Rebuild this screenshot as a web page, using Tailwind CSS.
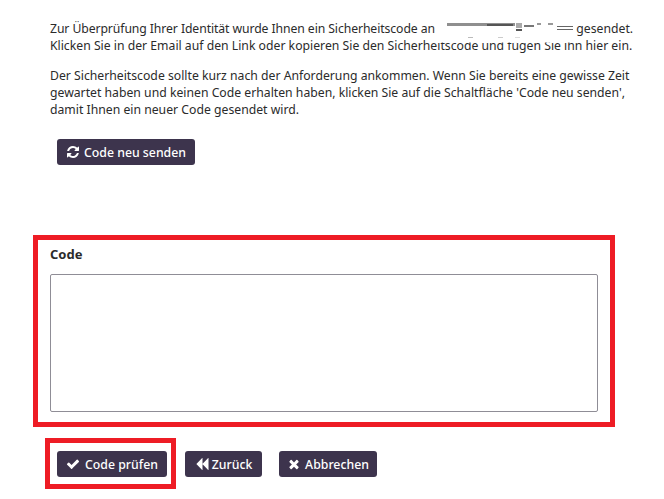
<!DOCTYPE html>
<html lang="de">
<head>
    <meta charset="UTF-8">
    <script src="https://cdn.jsdelivr.net/npm/@tailwindcss/browser@4"></script>
    <title>Code</title>
</head>
<body class="bg-white font-['Noto_Sans','Open_Sans',sans-serif] text-[12.22px] leading-[17px] text-[#2b2b2b] w-[664px] h-[499px] overflow-hidden">
    <div class="pt-[20px] pl-[50px]">
        <p class="whitespace-nowrap"><span class="tracking-[-0.09px]">Zur Überprüfung Ihrer Identität wurde Ihnen ein Sicherheitscode an</span> <span class="inline-block w-[135px] h-[10px]"></span> gesendet.<br>Klicken Sie in der Email auf den Link oder kopieren Sie den Sicherheitscode und fügen Sie ihn hier ein.</p>
        <p class="mt-[13px] whitespace-nowrap">Der Sicherheitscode sollte kurz nach der Anforderung ankommen. Wenn Sie bereits eine gewisse Zeit<br>gewartet haben und keinen Code erhalten haben, klicken Sie auf die Schaltfläche 'Code neu senden',<br>damit Ihnen ein neuer Code gesendet wird.</p>
        <button class="mt-[21px] ml-[7px] h-[26px] w-[138px] flex items-center justify-center gap-[4px] rounded-[3px] bg-[#3d344d] text-white text-[12.3px] font-medium">
            <svg width="14" height="14" viewBox="0 0 1792 1792" fill="currentColor"><path d="M1639 1056q0 5-1 7-64 268-268 434.5t-478 166.5q-146 0-282.5-55t-243.5-157l-129 129q-19 19-45 19t-45-19-19-45v-448q0-26 19-45t45-19h448q26 0 45 19t19 45-19 45l-137 137q71 66 161 102t187 36q134 0 250-65t186-179q11-17 53-117 8-23 30-23h192q13 0 22.5 9.5t9.5 22.5zm25-800v448q0 26-19 45t-45 19h-448q-26 0-45-19t-19-45 19-45l138-138q-148-137-349-137-134 0-250 65t-186 179q-11 17-53 117-8 23-30 23h-199q-13 0-22.5-9.5t-9.5-22.5v-7q65-268 270-434.5t480-166.5q146 0 284 55.5t245 156.5l130-129q19-19 45-19t45 19 19 45z"/></svg>
            Code neu senden
        </button>
    </div>

    <!--geschwaerzte Adresse, liegt ueber dem Text-->
    <svg class="absolute left-[430px] top-[20px]" width="145" height="24" viewBox="0 0 145 24">
        <rect x="3" y="17" width="142" height="5.5" fill="#fff"/>
        <rect x="17" y="3" width="68" height="3" fill="#8f8f8f"/>
        <rect x="57" y="4" width="26" height="2" fill="#555"/>
        <rect x="86" y="3" width="6" height="5" fill="#aaa"/>
        <rect x="86" y="9" width="6" height="2" fill="#555"/>
        <rect x="94" y="5" width="10" height="2" fill="#777"/>
        <rect x="107" y="3" width="4" height="2" fill="#999"/>
        <rect x="118" y="3" width="5" height="2" fill="#999"/>
        <rect x="127" y="6" width="16" height="1" fill="#666"/>
        <rect x="127" y="9" width="16" height="1" fill="#666"/>
        <rect x="38" y="17" width="5" height="1" fill="#bbb"/>
        <rect x="68" y="17" width="5" height="1" fill="#ccc"/>
        <rect x="85" y="17" width="5" height="1" fill="#ddd"/>
    </svg>

    <!--code field-->
    <div class="mt-[70px] ml-[33px] w-[582px] h-[192px] border-[5px] border-[#ee1c25] pt-[5px] px-[12px]">
        <label class="block font-bold text-[13px] leading-[18px]" for="code">Code</label>
        <textarea id="code" class="block mt-[11px] w-[548px] h-[138px] border border-[#8f8d96] rounded-[2px] bg-white resize-none"></textarea>
    </div>

    <!--buttons-->
    <div class="mt-[11px] ml-[45px] flex items-start">
        <div class="w-[131px] h-[51px] border-[5px] border-[#ee1c25] pt-[8px] pl-[7px]">
            <button class="h-[26px] w-[110px] flex items-center justify-center gap-[5px] rounded-[3px] bg-[#3d344d] text-white text-[12.3px] font-medium">
                <svg width="14" height="14" viewBox="0 0 1792 1792" fill="currentColor"><path d="M1671 566q0 40-28 68l-724 724-136 136q-28 28-68 28t-68-28l-136-136-362-362q-28-28-28-68t28-68l136-136q28-28 68-28t68 28l294 295 656-657q28-28 68-28t68 28l136 136q28 28 28 68z"/></svg>
                Code prüfen
            </button>
        </div>
        <button class="mt-[13px] ml-[9px] h-[26px] w-[77px] flex items-center justify-center gap-[3px] rounded-[3px] bg-[#3d344d] text-white text-[12.3px] font-medium">
            <svg width="14" height="14" viewBox="0 0 1792 1792" fill="currentColor"><path d="M1683 141q19-19 32-13t13 32v1472q0 26-13 32t-32-13l-710-710q-9-9-13-19v710q0 26-13 32t-32-13l-710-710q-19-19-19-45t19-45l710-710q19-19 32-13t13 32v710q4-10 13-19z"/></svg>
            Zurück
        </button>
        <button class="mt-[13px] ml-[17px] h-[26px] w-[98px] flex items-center justify-center gap-[4px] rounded-[3px] bg-[#3d344d] text-white text-[12.3px] font-medium">
            <svg width="14" height="14" viewBox="0 0 1792 1792" fill="currentColor"><path d="M1490 1322q0 40-28 68l-136 136q-28 28-68 28t-68-28l-294-294-294 294q-28 28-68 28t-68-28l-136-136q-28-28-28-68t28-68l294-294-294-294q-28-28-28-68t28-68l136-136q28-28 68-28t68 28l294 294 294-294q28-28 68-28t68 28l136 136q28 28 28 68t-28 68l-294 294 294 294q28 28 28 68z"/></svg>
            Abbrechen
        </button>
    </div>
</body>
</html>
